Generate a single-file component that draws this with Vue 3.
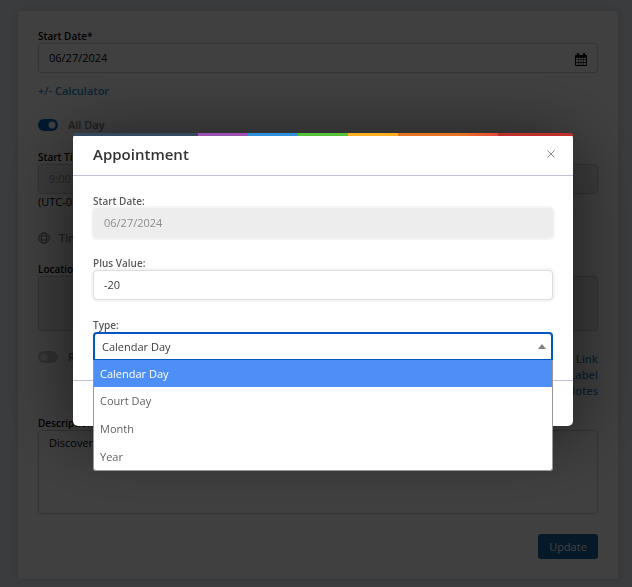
<script setup>
import { ref } from 'vue'

const startDate = ref('06/27/2024')
const allDay = ref(true)
const startTime = ref('9:00 AM')
const location = ref('')
const recurring = ref(false)
const description = ref('Discovery')
const plusValue = ref('-20')
const options = ['Calendar Day', 'Court Day', 'Month', 'Year']
const type = ref('Calendar Day')
const open = ref(true)

function pick(option) {
  type.value = option
  open.value = false
}
</script>

<template>
  <div class="page">
    <form class="card" @submit.prevent>
      <label class="label" for="start">Start Date*</label>
      <div class="date">
        <input id="start" v-model="startDate" class="field" type="text" />
        <svg class="cal" viewBox="0 0 13 14" aria-hidden="true">
          <path fill-rule="evenodd" d="M1 2h1V1q0-1 1.200-1T4.400 1v1h4.200V1q0-1 1.200-1T11 1v1h1q1 0 1 1v10q0 1-1 1H1q-1 0-1-1V3q0-1 1-1zM1 5v2h2.200V5zm2.800 0v2h2.400V5zm3 0v2h2.400V5zm3 0v2H12V5zM1 7.600v2.200h2.200V7.600zm2.800 0v2.200h2.400V7.600zm3 0v2.200h2.400V7.600zm3 0v2.200H12V7.600zM1 10.400V13h2.200v-2.600zm2.800 0V13h2.400v-2.600zm3 0V13h2.400v-2.600zm3 0V13H12v-2.600z" />
        </svg>
      </div>
      <a class="link calc" href="#">+/- Calculator</a>
      <label class="switch all-day">
        <input v-model="allDay" type="checkbox" />
        <span>All Day</span>
      </label>
      <label class="label" for="time">Start Time</label>
      <input id="time" v-model="startTime" class="field" type="text" disabled />
      <p class="zone">(UTC-07:00)</p>
      <p class="tz">
        <svg viewBox="0 0 12 12" aria-hidden="true">
          <circle cx="6" cy="6" r="5.300" />
          <ellipse cx="6" cy="6" rx="2.600" ry="5.300" />
          <path d="M1.200 4h9.600M1.200 8h9.600" />
        </svg>
        <span>Time Zone</span>
      </p>
      <label class="label" for="place">Location</label>
      <textarea id="place" v-model="location" class="field place" disabled></textarea>
      <div class="extras">
        <label class="switch">
          <input v-model="recurring" type="checkbox" />
          <span>Recur</span>
        </label>
        <div class="links">
          <a class="link" href="#">Add Link</a>
          <a class="link" href="#">Add Label</a>
          <a class="link" href="#">Add Notes</a>
        </div>
      </div>
      <label class="label" for="desc">Description</label>
      <textarea id="desc" v-model="description" class="field desc"></textarea>
      <button class="update" type="submit">Update</button>
    </form>

    <div class="overlay">
      <section class="modal" role="dialog" aria-labelledby="title">
        <div class="stripe"></div>
        <header class="head">
          <h1 id="title">Appointment</h1>
          <button class="close" type="button" aria-label="Close">
            <svg viewBox="0 0 8 8" aria-hidden="true"><path d="M.5.5l7 7M7.500.5l-7 7" /></svg>
          </button>
        </header>
        <div class="body">
          <div class="group">
            <label class="label" for="from">Start Date:</label>
            <input id="from" class="field" type="text" :value="startDate" disabled />
          </div>
          <div class="group">
            <label class="label" for="plus">Plus Value:</label>
            <input id="plus" v-model="plusValue" class="field" type="text" />
          </div>
          <div class="group">
            <label id="type-label" class="label" for="type">Type:</label>
            <div class="combo">
              <button id="type" class="select" type="button" aria-haspopup="listbox" :aria-expanded="open" @click="open = !open">
                <span>{{ type }}</span>
                <i class="arrow"></i>
              </button>
              <ul v-if="open" class="menu" role="listbox" aria-labelledby="type-label">
                <li
                  v-for="option in options"
                  :key="option"
                  role="option"
                  :aria-selected="option === type"
                  :class="{ active: option === type }"
                  @click="pick(option)"
                >{{ option }}</li>
              </ul>
            </div>
          </div>
        </div>
        <footer class="foot"></footer>
      </section>
    </div>
  </div>
</template>

<style>
body {
  background: #ebeff3;
}
</style>

<style scoped>
* {
  box-sizing: border-box;
}

.page {
  min-height: 100vh;
  padding: 11px 14px 8px 18px;
  font: 11px/16px "Open Sans", "Noto Sans", sans-serif;
  color: #000;
}

.card {
  display: flex;
  flex-direction: column;
  padding: 18px 20px 20px;
  border-radius: 3px;
  background: #fff;
  box-shadow: 0 0 8px rgba(0, 0, 0, 0.15);
}

.label {
  height: 14px;
  font-size: 10px;
  line-height: 14px;
  font-weight: 600;
}

.field {
  display: block;
  width: 100%;
  height: 30px;
  margin: 0;
  padding: 0 10px 2px;
  border: 1px solid #d0d0d0;
  border-radius: 4px;
  background: #fff;
  box-shadow: 0 0 0 1px #f4f4f4;
  font: inherit;
  color: inherit;
  resize: none;
}

.field:disabled {
  background: #ededed;
  color: #8c8c8c;
}

.date {
  position: relative;
}

.cal {
  position: absolute;
  right: 11px;
  top: 10px;
  width: 12px;
  height: 13px;
}

.link {
  font-weight: 600;
  color: #2a88cc;
  text-decoration: none;
}

.calc {
  margin-top: 10px;
  align-self: flex-start;
}

.switch {
  display: flex;
  align-items: center;
  gap: 10px;
  height: 16px;
  font-weight: 600;
  color: #777;
}

.switch input {
  appearance: none;
  width: 20px;
  height: 12px;
  margin: 0;
  border-radius: 6px;
  background: radial-gradient(circle at 6px 6px, #eee 3px, transparent 4px) #c4c4c4;
}

.switch input:checked {
  background: radial-gradient(circle at 14px 6px, #fff 3px, transparent 4px) #0063b8;
}

.all-day {
  margin: 18px 0 17px;
}

.zone {
  margin: 0;
}

.tz {
  display: flex;
  align-items: center;
  gap: 9px;
  margin: 20px 0 16px;
  color: #777;
  font-weight: 600;
}

.tz svg {
  width: 12px;
  height: 12px;
  fill: none;
  stroke: #777;
}

.place {
  height: 55px;
}

.extras {
  display: flex;
  justify-content: space-between;
  padding: 18px 0 17px;
}

.links {
  display: flex;
  flex-direction: column;
  padding-top: 2px;
  text-align: right;
}

.desc {
  height: 84px;
  padding: 4px 10px;
}

.update {
  align-self: flex-end;
  width: 60px;
  height: 25px;
  margin-top: 20px;
  padding: 0;
  border: 0;
  border-radius: 3px;
  background: #1a64a4;
  color: #fff;
  font: inherit;
}

.overlay {
  position: fixed;
  inset: 0;
  padding: 133px 59px 0 73px;
  background: rgba(0, 0, 0, 0.75);
}

.modal {
  border-radius: 5px;
  background: #fff;
  color: #3c3c3e;
  box-shadow: 0 10px 70px rgba(0, 0, 0, 0.6);
}

.stripe {
  height: 3px;
  border-radius: 5px 5px 0 0;
  background: linear-gradient(90deg, #34495e 25%, #9b50af 25% 35%, #2f8fd8 35% 45%, #55c137 45% 55%, #ffae24 55% 65%, #e67425 65% 77%, #e74838 85%, #c0302a 85%);
}

.head {
  display: flex;
  align-items: center;
  justify-content: space-between;
  height: 40px;
  padding: 0 18px 3px 20px;
  border-bottom: 1px solid #c4c1d6;
}

h1 {
  margin: 0;
  font-size: 15px;
  line-height: 20px;
  font-weight: 600;
  color: #333;
}

.close {
  display: flex;
  padding: 0;
  border: 0;
  background: none;
}

.close svg {
  width: 8px;
  height: 8px;
  fill: none;
  stroke: #888;
}

.body {
  display: flex;
  flex-direction: column;
  gap: 18px;
  padding: 18px 20px 20px;
  border-bottom: 1px solid #c4c1d6;
}

.group {
  display: flex;
  flex-direction: column;
}

.group .label {
  color: #59595d;
}

.group .field {
  border-color: #ddd;
  box-shadow: 0 0 0 2px #f5f5f5;
}

.group .field:disabled {
  border-color: #ededed;
}

.combo {
  position: relative;
}

.select {
  display: flex;
  align-items: center;
  justify-content: space-between;
  width: 100%;
  height: 28px;
  padding: 0 5px 0 7px;
  border: 2px solid #0056bd;
  border-bottom-width: 1px;
  border-radius: 4px 4px 0 0;
  background: #fff;
  font: inherit;
  color: inherit;
}

.arrow {
  border: 4px solid transparent;
  border-top: 0;
  border-bottom: 5px solid #808080;
}

.menu {
  position: absolute;
  top: 100%;
  left: 0;
  right: 0;
  margin: 0;
  padding: 0;
  border: 1px solid #999;
  border-top: 0;
  border-radius: 0 0 3px 3px;
  background: #fff;
  list-style: none;
  color: #606164;
}

.menu li {
  padding: 6px;
}

.menu .active {
  padding-bottom: 5px;
  background: #4d8ef7;
  color: #fff;
}

.menu li:last-child {
  padding-bottom: 5px;
}

.foot {
  height: 45px;
}
</style>
